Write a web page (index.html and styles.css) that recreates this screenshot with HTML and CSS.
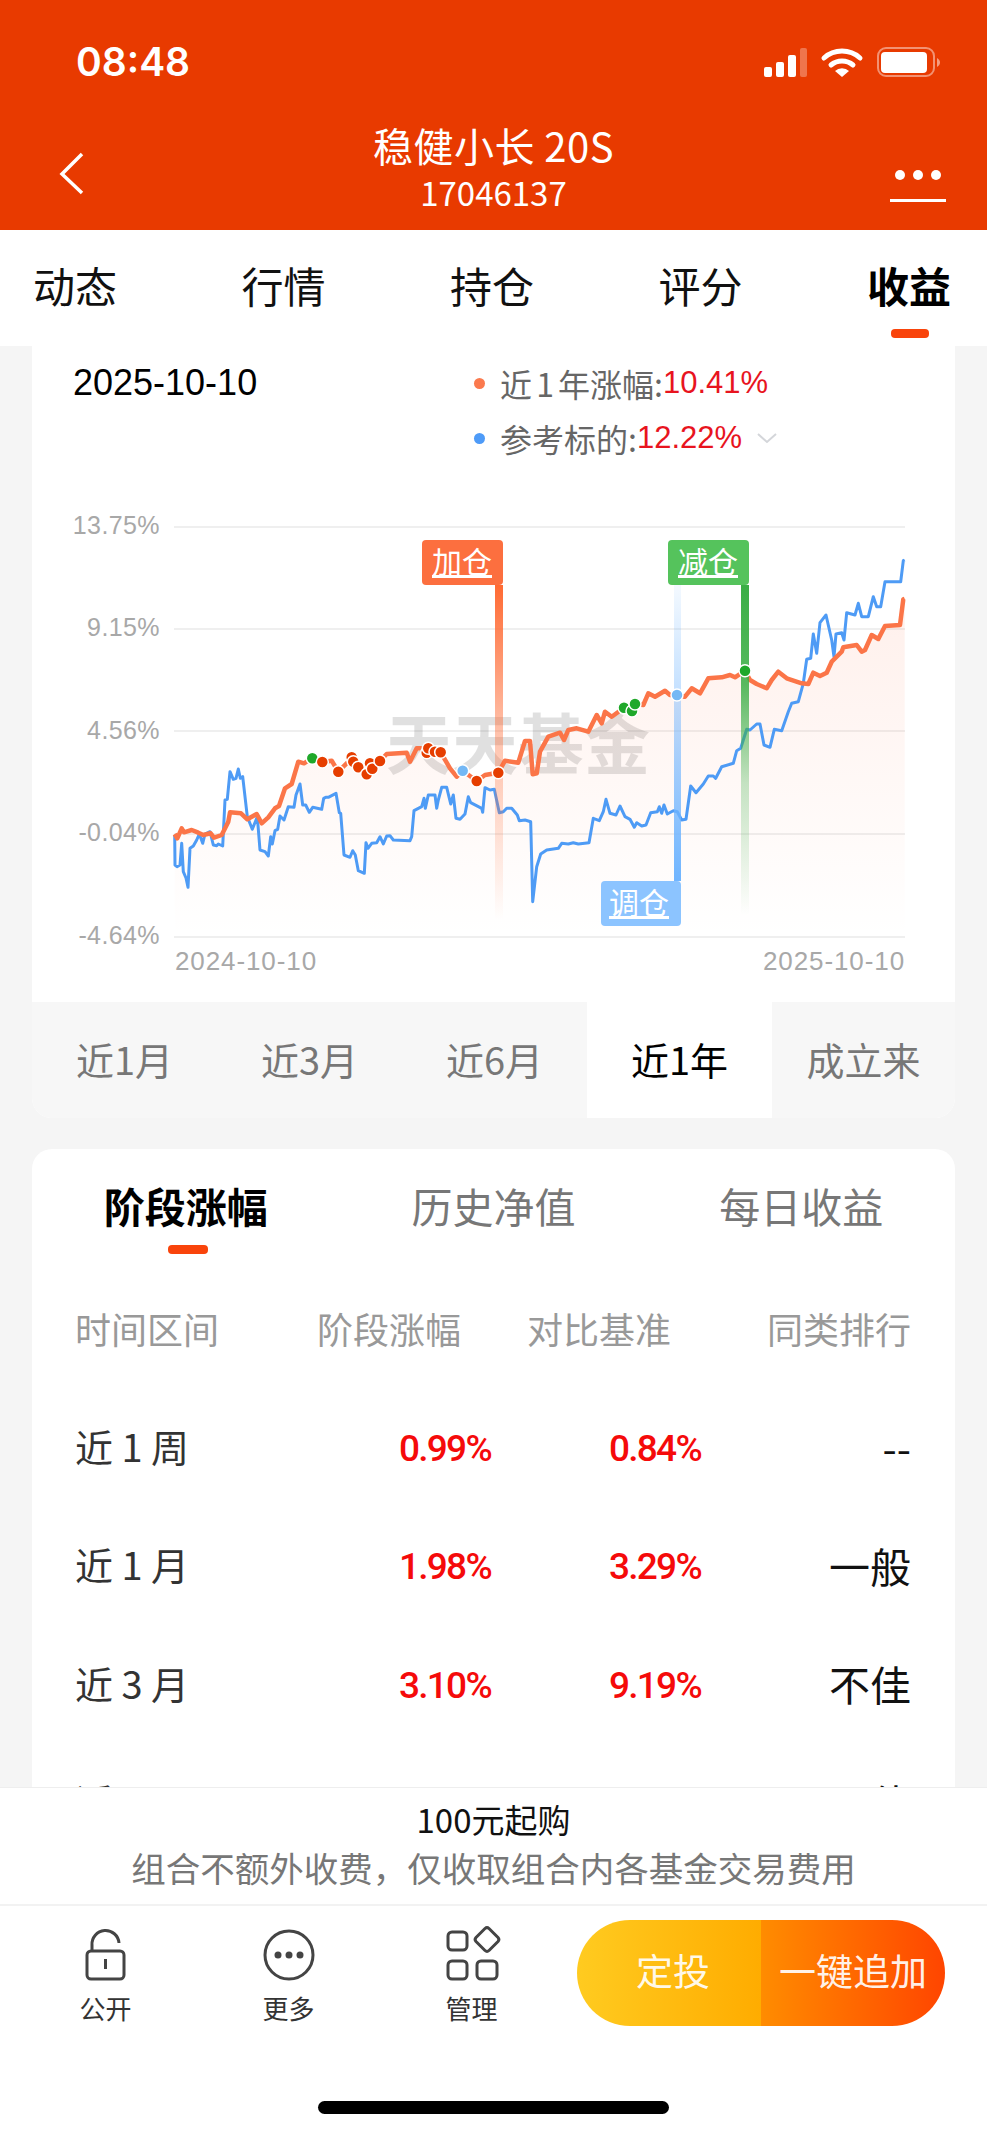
FILE: index.html
```html
<!DOCTYPE html>
<html lang="zh-CN">

<head>
    <meta charset="UTF-8">
    <meta name="viewport" content="width=device-width, initial-scale=1.0">
    <title>稳健小长 20S</title>
    <link rel="stylesheet" href="styles.css">
</head>

<body>
    <div class="app">
        <header class="top">
            <div class="status">
                <span class="time">08:48</span>
                <svg class="status-icons" viewBox="760 37 185 50" width="185" height="50">
                    <rect x="764" y="67" width="8" height="10" rx="2" fill="#fff" />
                    <rect x="776" y="62" width="8" height="15" rx="2" fill="#fff" />
                    <rect x="788" y="55" width="8" height="22" rx="2" fill="#fff" />
                    <rect x="800" y="48" width="7" height="29" rx="2" fill="#fff" opacity=".3" />
                    <path d="M824 58a27 27 0 0 1 36 0M831 65a17 17 0 0 1 22 0" fill="none" stroke="#fff" stroke-width="5" stroke-linecap="round" />
                    <path d="M835 71a10 10 0 0 1 14 0l-7 6z" fill="#fff" />
                    <rect x="878" y="48" width="56" height="28" rx="8" fill="none" stroke="#fff" stroke-width="2" opacity=".45" />
                    <rect x="881" y="52" width="46" height="21" rx="4" fill="#fff" />
                    <path d="M937 58c2 1 3 3 3 4.500s-1 3.500-3 4.500z" fill="#fff" opacity=".5" />
                </svg>
            </div>
            <div class="nav">
                <svg class="back" viewBox="0 0 28 44" width="28" height="44">
                    <path d="M24 3 4 23l20 19" fill="none" stroke="#fff" stroke-width="3.500" />
                </svg>
                <div class="nav-title">
                    <div class="fund-name">稳健小长 20S</div>
                    <div class="fund-code">17046137</div>
                </div>
                <svg class="more" viewBox="0 0 60 38" width="60" height="38">
                    <circle cx="12" cy="7" r="5" fill="#fff" />
                    <circle cx="30" cy="7" r="5" fill="#fff" />
                    <circle cx="48" cy="7" r="5" fill="#fff" />
                    <rect x="2" y="31" width="56" height="3" fill="#fff" />
                </svg>
            </div>
        </header>

        <nav class="tabs">
            <div class="tab">动态</div>
            <div class="tab">行情</div>
            <div class="tab">持仓</div>
            <div class="tab">评分</div>
            <div class="tab active">收益</div>
        </nav>

        <main class="content">
            <section class="chart-card">
                <div class="chart-head">
                    <div class="chart-date">2025-10-10</div>
                    <div class="legend">
                        <div class="legend-row"><i class="dot dot-orange"></i><span class="legend-label">近 1 年涨幅:</span><b>10.41%</b></div>
                        <div class="legend-row"><i class="dot dot-blue"></i><span class="legend-label">参考标的:</span><b>12.22%</b>
                            <svg class="chevron" viewBox="0 0 20 11" width="20" height="11">
                                <path d="M1 1l9 8 9-8" fill="none" stroke="#d4d6da" stroke-width="2" />
                            </svg>
                        </div>
                    </div>
                </div>

                <svg class="chart" viewBox="32 500 923 502" width="923" height="502">
                    <defs>
                        <linearGradient id="area" x1="0" y1="0" x2="0" y2="1">
                            <stop offset="0" stop-color="#ff5a28" stop-opacity=".09" />
                            <stop offset="1" stop-color="#ff5a28" stop-opacity="0" />
                        </linearGradient>
                        <linearGradient id="bar-orange" x1="0" y1="0" x2="0" y2="1">
                            <stop offset="0" stop-color="#ff6a33" />
                            <stop offset=".45" stop-color="#ff6a33" stop-opacity=".4" />
                            <stop offset="1" stop-color="#ff6a33" stop-opacity="0" />
                        </linearGradient>
                        <linearGradient id="bar-green" x1="0" y1="0" x2="0" y2="1">
                            <stop offset="0" stop-color="#3aae45" />
                            <stop offset=".3" stop-color="#3aae45" stop-opacity=".85" />
                            <stop offset=".6" stop-color="#3aae45" stop-opacity=".3" />
                            <stop offset="1" stop-color="#3aae45" stop-opacity="0" />
                        </linearGradient>
                        <linearGradient id="bar-blue" x1="0" y1="0" x2="0" y2="1">
                            <stop offset="0" stop-color="#70b5ff" stop-opacity=".08" />
                            <stop offset="1" stop-color="#70b5ff" />
                        </linearGradient>
                    </defs>

                    <line class="grid-line" x1="174" y1="527" x2="905" y2="527" />
                    <line class="grid-line" x1="174" y1="629" x2="905" y2="629" />
                    <line class="grid-line" x1="174" y1="731" x2="905" y2="731" />
                    <line class="grid-line" x1="174" y1="834" x2="905" y2="834" />
                    <line class="grid-line" x1="174" y1="937" x2="905" y2="937" />

                    <text class="axis" x="160" y="534">13.75%</text>
                    <text class="axis" x="160" y="636">9.15%</text>
                    <text class="axis" x="160" y="739">4.56%</text>
                    <text class="axis" x="160" y="841">-0.04%</text>
                    <text class="axis" x="160" y="944">-4.64%</text>
                    <text class="axis-date" x="175" y="970">2024-10-10</text>
                    <text class="axis-date axis-date-end" x="905" y="970">2025-10-10</text>

                    <text class="watermark" x="386" y="769">天天基金</text>

                    <polygon fill="url(#area)" points="174.700,937 174.700,834 177.300,838.300 181.700,828.300 184,832.300 191.700,830 198.300,832.700 203.300,835 210.700,833.300 214,837.700 221.700,835 228.300,821.700 230,812.300 241,813.300 247.300,819.300 256.700,814 261.700,823.300 268.300,817.300 275,808.300 279,806 285,788.300 291.700,784 298.300,761.700 304,763.300 311.700,758.300 322.300,762 331.700,760.700 338.300,771.700 351.700,758.300 358.300,767.300 366.700,774.300 380,761 386.700,754 406.700,752.700 410,761.700 416.700,748.300 428.300,748.300 440.700,752.300 450,768.300 456.700,776.700 462.700,770.700 476.700,781 485,775 498.300,772.700 505,760.700 518.300,762.700 525,741 530,741 532.700,774.300 536.700,773.300 540,751.700 548.300,736.700 560,732.700 564,740 568.300,730 576.700,728.300 588.300,731.700 596.700,715 601.700,723.300 605,711.700 611.700,716.700 623.300,708.300 635,704 643.300,705 648.300,693.300 655,696.700 665,690.700 670,695 685,696.700 691.700,688.300 700,693.300 708.300,678.300 721.700,677.300 730,675 735,677.300 745,670.700 750,680 756.700,684 766.700,688.300 771.700,680 778.300,671.700 786.700,678.300 801.700,683.300 808.300,684 813.300,672.700 820,676 826.700,672.700 831.700,661.700 841.700,651.700 843.300,647.300 856.700,645 861.700,651.700 865,650 871.700,635 878.300,639 885,626 900,625 903.300,599.300 904.700,598.700 904.700,937" />

                    <polyline class="line-blue" points="174.700,835 175,865 177,866.700 180,865 181.700,843.300 183.300,871.700 186,878 188,887.300 190,848.300 193.300,846 196.700,840 199.300,834 202.700,843.300 205,834 210,831.700 213.300,845 216.700,845.700 218.300,844 222.700,846 225,800 227.300,799.300 230,771.700 233.300,779.300 236,778.300 238.300,769 240.300,778.300 242.700,776.700 247.300,816.700 252.300,829.300 257.300,816.700 260,850 265,851.700 268.300,856 270.700,836.700 272.300,844 275,830.700 277.700,829.300 280,816 284,820 288.300,806.700 294,807.300 296,795 300,784 302.700,805 305.700,805 309.300,812.300 312.700,807.300 321.700,809.300 323.700,798.300 325.700,797.300 328.300,797.300 336,793.300 339.300,812.700 340.700,813.300 344,855 350,857.300 352.700,850.700 355.300,855 358.300,870.700 364.300,873.300 366,842.700 368,848.300 371.700,843.300 376.700,842.700 380,836.700 383.300,844 386.700,836 390,835.700 393.300,840 410,840.700 411.700,836.700 414,810.700 421.700,806.700 424,798.300 425.300,808.300 428.300,795 435,795 436.700,808.300 438.300,800 441.700,787.300 446.700,787.300 450.700,804 453.300,795 456,818.300 460,819.300 465,814 468.300,796.700 470.700,802.700 481.700,808.300 482.700,812.300 485,787.700 490,790 494.300,789.300 499.300,812.700 503.300,811.700 506.700,808.300 511.700,808.300 517.300,815 519.300,820.700 525,820 530.700,821.700 532.700,901.700 536.700,866.700 540.700,854 546.700,850 558.300,848.300 561.700,843.300 568.300,844 573.300,842.700 578.300,844 589,842.700 593.300,818.300 599.300,820.700 603.300,811.700 606,799.300 610,813.300 616,815 620,806 625,816.700 630,819.300 634.300,827.300 636.700,822.700 641.700,826 646,825 650.700,812.700 657.300,811.700 659.300,806.700 661.700,813.300 664,805 667.300,814 673.300,810.700 677.300,811.700 681.700,820 686,819.300 690.700,786 696,792.700 703.300,784 708.300,776 713.300,776 715.700,778.300 721.700,766.700 733.300,763.300 736.700,750.700 740.700,748.300 746.700,729.300 750,730 756.700,724 760,724 764,745 770,747.300 774.300,729.300 781.700,730.700 788.300,711.700 791.700,703.300 798.300,701.700 803.300,683.300 806.700,659.300 810.700,658.300 813.300,634 816.700,653.300 820,622.700 826,615 831.700,640 834,656.700 836,634 841.700,632.700 844,640 846.700,612.700 855,615 858.300,603.300 861.700,616.700 868.300,616.700 873.300,596.700 876.700,606.700 880.700,606.700 885,581.700 900.700,581.700 903.300,560.700 904.700,560" />

                    <polyline class="line-orange" points="174.700,834 177.300,838.300 181.700,828.300 184,832.300 191.700,830 198.300,832.700 203.300,835 210.700,833.300 214,837.700 221.700,835 228.300,821.700 230,812.300 241,813.300 247.300,819.300 256.700,814 261.700,823.300 268.300,817.300 275,808.300 279,806 285,788.300 291.700,784 298.300,761.700 304,763.300 311.700,758.300 322.300,762 331.700,760.700 338.300,771.700 351.700,758.300 358.300,767.300 366.700,774.300 380,761 386.700,754 406.700,752.700 410,761.700 416.700,748.300 428.300,748.300 440.700,752.300 450,768.300 456.700,776.700 462.700,770.700 476.700,781 485,775 498.300,772.700 505,760.700 518.300,762.700 525,741 530,741 532.700,774.300 536.700,773.300 540,751.700 548.300,736.700 560,732.700 564,740 568.300,730 576.700,728.300 588.300,731.700 596.700,715 601.700,723.300 605,711.700 611.700,716.700 623.300,708.300 635,704 643.300,705 648.300,693.300 655,696.700 665,690.700 670,695 685,696.700 691.700,688.300 700,693.300 708.300,678.300 721.700,677.300 730,675 735,677.300 745,670.700 750,680 756.700,684 766.700,688.300 771.700,680 778.300,671.700 786.700,678.300 801.700,683.300 808.300,684 813.300,672.700 820,676 826.700,672.700 831.700,661.700 841.700,651.700 843.300,647.300 856.700,645 861.700,651.700 865,650 871.700,635 878.300,639 885,626 900,625 903.300,599.300 904.700,598.700" />

                    <!-- vertical flags -->
                    <rect x="495" y="585" width="8" height="335" fill="url(#bar-orange)" />
                    <rect x="741" y="585" width="8" height="330" fill="url(#bar-green)" />
                    <rect x="674" y="585" width="7" height="296" fill="url(#bar-blue)" />
                    <rect x="422" y="540" width="81" height="45" rx="4" fill="#fc6f3f" />
                    <rect x="668" y="540" width="81" height="45" rx="4" fill="#55c35c" />
                    <rect x="601" y="881" width="80" height="45" rx="4" fill="#8cc4ff" />
                    <text class="flag-text" x="462" y="573">加仓</text>
                    <text class="flag-text" x="708" y="573">减仓</text>
                    <text class="flag-text" x="639" y="914">调仓</text>

                    <!-- trade points -->
                    <circle class="pt pt-green" cx="312.300" cy="758.300" r="6" />
                    <circle class="pt pt-red" cx="322.300" cy="762" r="6" />
                    <circle class="pt pt-red" cx="338.300" cy="771.700" r="6" />
                    <circle class="pt pt-red" cx="351.700" cy="757.300" r="6" />
                    <circle class="pt pt-red" cx="353.300" cy="761.700" r="6" />
                    <circle class="pt pt-red" cx="358.300" cy="767.300" r="6" />
                    <circle class="pt pt-red" cx="366.700" cy="774.300" r="6" />
                    <circle class="pt pt-red" cx="370" cy="763.300" r="6" />
                    <circle class="pt pt-red" cx="372.300" cy="768.700" r="6" />
                    <circle class="pt pt-red" cx="380" cy="761" r="6" />
                    <circle class="pt pt-red" cx="426.700" cy="752.700" r="6" />
                    <circle class="pt pt-red" cx="428.300" cy="748.300" r="6" />
                    <circle class="pt pt-red" cx="435" cy="751.700" r="6" />
                    <circle class="pt pt-red" cx="440.700" cy="752.300" r="6" />
                    <circle class="pt pt-blue" cx="462.700" cy="770.700" r="6" />
                    <circle class="pt pt-red" cx="476.700" cy="781" r="6" />
                    <circle class="pt pt-red" cx="498.300" cy="772.700" r="6" />
                    <circle class="pt pt-green" cx="624" cy="707.700" r="6" />
                    <circle class="pt pt-green" cx="632" cy="711" r="6" />
                    <circle class="pt pt-green" cx="635" cy="704" r="6" />
                    <circle class="pt pt-blue" cx="677" cy="695" r="6" />
                    <circle class="pt pt-green" cx="745" cy="670.700" r="6" />
                </svg>

                <div class="ranges">
                    <div class="range">近1月</div>
                    <div class="range">近3月</div>
                    <div class="range">近6月</div>
                    <div class="range active">近1年</div>
                    <div class="range">成立来</div>
                </div>
            </section>

            <section class="table-card">
                <div class="card-tabs">
                    <div class="card-tab active">阶段涨幅</div>
                    <div class="card-tab">历史净值</div>
                    <div class="card-tab">每日收益</div>
                </div>
                <div class="row row-head">
                    <div>时间区间</div>
                    <div class="num">阶段涨幅</div>
                    <div class="num">对比基准</div>
                    <div class="rank">同类排行</div>
                </div>
                <div class="row">
                    <div class="period">近 1 周</div>
                    <div class="num">0.99%</div>
                    <div class="num">0.84%</div>
                    <div class="rank">--</div>
                </div>
                <div class="row">
                    <div class="period">近 1 月</div>
                    <div class="num">1.98%</div>
                    <div class="num">3.29%</div>
                    <div class="rank">一般</div>
                </div>
                <div class="row">
                    <div class="period">近 3 月</div>
                    <div class="num">3.10%</div>
                    <div class="num">9.19%</div>
                    <div class="rank">不佳</div>
                </div>
                <div class="row">
                    <div class="period">近 6 月</div>
                    <div class="num"></div>
                    <div class="num"></div>
                    <div class="rank">不佳</div>
                </div>
            </section>
        </main>

        <footer class="footer">
            <div class="info">
                <div class="info-main">100元起购</div>
                <div class="info-sub">组合不额外收费，仅收取组合内各基金交易费用</div>
            </div>
            <div class="bar">
                <div class="tool">
                    <svg viewBox="76 1928 60 54" width="60" height="54">
                        <rect x="87" y="1951" width="37" height="28" rx="4" class="ico" />
                        <path d="M92 1950v-5a13.500 13.500 0 0 1 27-2" class="ico" />
                        <path d="M105.500 1959v10" class="ico" />
                    </svg>
                    <span>公开</span>
                </div>
                <div class="tool">
                    <svg viewBox="258 1928 60 54" width="60" height="54">
                        <circle cx="288" cy="1955" r="24" class="ico" />
                        <circle cx="277" cy="1955" r="3.500" fill="#444" />
                        <circle cx="288" cy="1955" r="3.500" fill="#444" />
                        <circle cx="299" cy="1955" r="3.500" fill="#444" />
                    </svg>
                    <span>更多</span>
                </div>
                <div class="tool">
                    <svg viewBox="441 1928 60 54" width="60" height="54">
                        <rect x="447" y="1932" width="19" height="18" rx="4" class="ico" />
                        <rect x="447" y="1961" width="19" height="18" rx="4" class="ico" />
                        <rect x="476" y="1961" width="20" height="18" rx="4" class="ico" />
                        <path d="M484 1928.500a3 3 0 0 1 4 0l9 9a3 3 0 0 1 0 4l-9 9a3 3 0 0 1-4 0l-9-9a3 3 0 0 1 0-4z" class="ico" />
                    </svg>
                    <span>管理</span>
                </div>
                <div class="buy">
                    <div class="buy-left">定投</div>
                    <div class="buy-right">一键追加</div>
                </div>
            </div>
            <div class="home"></div>
        </footer>
    </div>
</body>

</html>
```

FILE: styles.css
```css
* {
    box-sizing: border-box;
}

body {
    margin: 0;
    font-family: "Noto Sans CJK SC", sans-serif;
    background-color: #f5f5f5;
}

.app {
    display: flex;
    flex-direction: column;
    height: 2135px;
    overflow: hidden;
}

/* Red header */
.top {
    height: 230px;
    flex-shrink: 0;
    background-color: #e83a00;
    color: white;
}

.status {
    display: flex;
    justify-content: space-between;
    align-items: center;
    height: 87px;
    padding: 37px 42px 0 76px;
}

.time {
    font-family: Inter, sans-serif;
    font-size: 39px;
    font-weight: 600;
    line-height: 50px;
}

.nav {
    display: grid;
    grid-template-columns: 1fr auto 1fr;
    align-items: start;
}

.back {
    margin: 64px 0 0 58px;
}

.more {
    justify-self: end;
    margin: 81px 39px 0 0;
}

.nav-title {
    padding-top: 35px;
    text-align: center;
}

.fund-name {
    font-size: 40px;
    line-height: 46px;
    letter-spacing: 0.5px;
}

.fund-code {
    font-size: 33px;
    line-height: 40px;
    margin-top: 4px;
}

/* Top tabs */
.tabs {
    display: flex;
    justify-content: space-between;
    height: 116px;
    flex-shrink: 0;
    padding: 30px 36px 0 33px;
    background-color: white;
}

.tab {
    font-size: 42px;
    line-height: 50px;
    color: #111;
}

.tab.active {
    position: relative;
    font-weight: bold;
    color: black;
}

.tab.active::after {
    content: "";
    position: absolute;
    left: 24px;
    top: 69px;
    width: 38px;
    height: 9px;
    border-radius: 4px;
    background-color: #f9440b;
}

.content {
    flex: 1;
    min-height: 0;
    overflow: hidden;
    padding: 0 32px;
}

/* Chart card */
.chart-card {
    border-radius: 0 0 20px 20px;
    background-color: white;
    overflow: hidden;
}

.chart-head {
    display: flex;
    height: 154px;
    padding: 12px 0 0 41px;
}

.chart-date {
    width: 401px;
    font-family: "Liberation Sans", sans-serif;
    font-size: 36px;
    line-height: 50px;
    color: black;
}

.legend-row {
    display: flex;
    align-items: center;
    height: 50px;
    margin-bottom: 5px;
    font-size: 32px;
    color: #666;
}

.legend-label {
    word-spacing: -3px;
}

.legend-row b {
    font-family: "Liberation Sans", sans-serif;
    font-size: 31px;
    font-weight: normal;
    color: #e8141e;
}

.dot {
    width: 11px;
    height: 11px;
    margin-right: 15px;
    border-radius: 50%;
}

.dot-orange {
    background-color: #fb7a4e;
}

.dot-blue {
    background-color: #4e9bf8;
}

.chevron {
    margin-left: 15px;
}

.chart {
    display: block;
}

.grid-line {
    stroke: #efefef;
    stroke-width: 2;
}

.axis,
.axis-date {
    font-family: "Liberation Sans", sans-serif;
    font-size: 25px;
    fill: #a8a8a8;
    letter-spacing: 0.4px;
}

.axis {
    text-anchor: end;
}

.axis-date {
    font-size: 26px;
    letter-spacing: 0.9px;
}

.axis-date-end {
    text-anchor: end;
}

.watermark {
    font-size: 66px;
    font-weight: bold;
    fill: rgba(0, 0, 0, 0.12);
}

.line-blue,
.line-orange {
    fill: none;
    stroke-linejoin: round;
}

.line-blue {
    stroke: #4e9bf5;
    stroke-width: 3;
}

.line-orange {
    stroke: #fb7548;
    stroke-width: 4.5;
}

.flag-text {
    font-size: 30px;
    fill: white;
    text-anchor: middle;
    text-decoration: underline;
}

.pt {
    stroke: white;
    stroke-width: 1.5;
}

.pt-red {
    fill: #e63e00;
}

.pt-green {
    fill: #1fa82a;
}

.pt-blue {
    fill: #74b8f5;
}

.ranges {
    display: grid;
    grid-template-columns: repeat(4, 185px) 1fr;
    height: 116px;
    background-color: #f7f7f7;
}

.range {
    font-size: 38px;
    line-height: 114px;
    text-align: center;
    color: #777;
}

.range.active {
    background-color: white;
    color: black;
}

/* Table card */
.table-card {
    margin-top: 31px;
    padding-bottom: 20px;
    border-radius: 20px;
    background-color: white;
}

.card-tabs {
    display: grid;
    grid-template-columns: repeat(3, 1fr);
    height: 151px;
    padding-top: 30px;
}

.card-tab {
    position: relative;
    font-size: 41px;
    line-height: 52px;
    text-align: center;
    color: #777;
}

.card-tab.active {
    font-weight: bold;
    color: black;
}

.card-tab.active::after {
    content: "";
    position: absolute;
    left: 136px;
    top: 66px;
    width: 40px;
    height: 9px;
    border-radius: 4px;
    background-color: #f9440b;
}

.row {
    display: grid;
    grid-template-columns: 1fr 210px 210px 210px;
    align-items: center;
    height: 118.500px;
    padding: 0 44px 0 43px;
}

.row-head {
    height: 62px;
    margin-bottom: 27px;
    padding-bottom: 6px;
    font-size: 36px;
    color: #999;
}

.row-head .num {
    padding-right: 30px;
    font-family: inherit;
    font-size: 36px;
    font-weight: normal;
    letter-spacing: 0;
    color: #999;
}

.row-head .rank {
    padding-bottom: 0;
    font-size: 36px;
    color: #999;
}

.period {
    padding-bottom: 6px;
    font-size: 38px;
    color: #333;
}

.num {
    font-family: Roboto, sans-serif;
    font-size: 37px;
    font-weight: 500;
    letter-spacing: -1.7px;
    text-align: right;
    color: #f50a0a;
}

.rank {
    padding-bottom: 4px;
    font-size: 41px;
    text-align: right;
    color: #111;
}

/* Bottom */
.footer {
    flex-shrink: 0;
    border-top: 1px solid #eee;
    background-color: white;
}

.info {
    height: 118px;
    padding-top: 8px;
    border-bottom: 2px solid #f2f2f2;
    text-align: center;
}

.info-main {
    font-size: 33px;
    line-height: 46px;
    color: #111;
}

.info-sub {
    margin-top: 2px;
    font-size: 34.500px;
    line-height: 46px;
    color: #777;
}

.bar {
    display: flex;
    height: 120px;
    padding: 14px 42px 0 14px;
}

.tool {
    display: flex;
    flex-direction: column;
    align-items: center;
    width: 183px;
    padding-top: 8px;
}

.tool svg {
    overflow: visible;
}

.tool span {
    margin-top: 8px;
    font-size: 26px;
    line-height: 36px;
    color: #333;
}

.ico {
    fill: none;
    stroke: #444;
    stroke-width: 3;
}

.buy {
    display: flex;
    height: 106px;
    margin-left: 14px;
    flex: 1;
    border-radius: 53px;
    overflow: hidden;
    font-size: 37px;
    line-height: 100px;
    color: rgba(255, 255, 255, 0.92);
}

.buy-left {
    width: 184px;
    padding-left: 59px;
    background: linear-gradient(to right, #ffcb20, #ffac00);
}

.buy-right {
    flex: 1;
    padding-left: 18px;
    background: linear-gradient(to right, #ff8c00, #ff4500);
}

.home {
    width: 351px;
    height: 13px;
    margin: 75px auto 21px;
    border-radius: 7px;
    background-color: black;
}
```
